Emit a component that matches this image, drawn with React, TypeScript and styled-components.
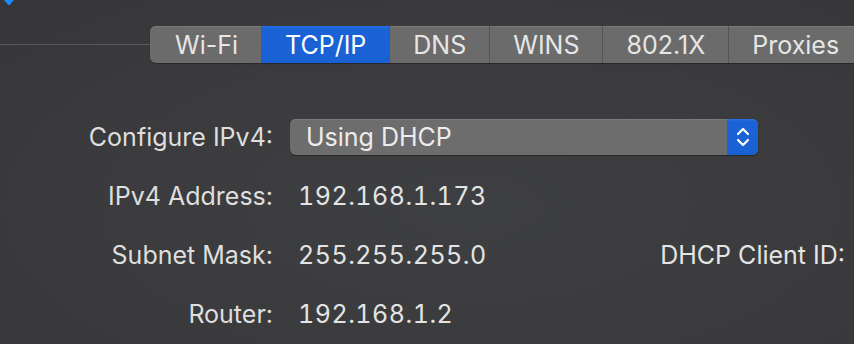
import React from 'react';
import styled, { createGlobalStyle } from 'styled-components';

const GlobalStyle = createGlobalStyle`
    html, body {
        margin: 0;
        padding: 0;
        background: #3b3b3d;
        overflow: hidden;
    }
    * {
        box-sizing: border-box;
    }
`;

const Window = styled.div`
    width: 854px;
    height: 344px;
    overflow: hidden;
    display: flex;
    flex-direction: column;
    font-family: "Inter", "Noto Sans", sans-serif;
    color: #e2e2e2;
    background: radial-gradient(ellipse at 55% 60%, #3e3f42 0%, #3b3b3d 55%, #363638 100%);
    & > * {
        flex-shrink: 0;
    }
`;

const TopStrip = styled.div`
    height: 26px;
    display: flex;
    align-items: flex-start;
    padding-left: 4px;
`;

const TabRow = styled.div`
    display: flex;
    align-items: center;
    height: 37px;
`;

const GroupLine = styled.div`
    width: 150px;
    flex-shrink: 0;
    height: 1px;
    background: #5a5a5c;
    margin-top: -1px;
`;

const TabGroup = styled.div`
    display: flex;
    flex-shrink: 0;
    height: 37px;
    border-radius: 6px 0 0 6px;
    overflow: hidden;
    background: #6b6b6b;
    box-shadow: inset 0 1px 0 #7a7a7a, 0 1px 1px rgba(0, 0, 0, 0.35);
`;

const Tab = styled.div<{ active?: boolean }>`
    display: flex;
    align-items: center;
    justify-content: center;
    flex-shrink: 0;
    padding: 0 23px;
    font-size: 25px;
    color: ${({ active }) => (active ? '#ffffff' : '#e6e6e6')};
    background: ${({ active }) => (active ? 'linear-gradient(#2470e6, #1a62d6 8%, #1a61d4)' : 'transparent')};
    border-left: 1px solid ${({ active }) => (active ? '#1a62d6' : '#555556')};
    &:first-child {
        border-left: none;
        padding-left: 25px;
    }
`;

const Form = styled.div`
    display: grid;
    grid-template-columns: 273px 1fr;
    column-gap: 17px;
    grid-auto-rows: 59px;
    align-items: center;
    margin-top: 44px;
`;

const Label = styled.div`
    text-align: right;
    font-size: 25px;
    color: #dedede;
`;

const Value = styled.div<{ split?: boolean }>`
    display: flex;
    align-items: center;
    justify-content: ${({ split }) => (split ? 'space-between' : 'flex-start')};
    padding-left: 8px;
    padding-right: 9px;
    font-size: 25px;
    color: #e4e4e4;
`;

const Number = styled.span`
    font-variant-numeric: tabular-nums;
    letter-spacing: 0.5px;
`;

const PopUp = styled.div`
    display: flex;
    align-items: stretch;
    width: 468px;
    height: 36px;
    border-radius: 6px;
    overflow: hidden;
    background: #6d6d6d;
    box-shadow: inset 0 1px 0 #7b7b7b, 0 1px 1px rgba(0, 0, 0, 0.35);
`;

const PopUpText = styled.div`
    flex: 1;
    display: flex;
    align-items: center;
    padding-left: 16px;
    font-size: 25px;
    color: #ececec;
`;

const Stepper = styled.div`
    width: 31px;
    display: flex;
    align-items: center;
    justify-content: center;
    background: linear-gradient(#2470e6, #1a62d6 8%, #1a61d4);
`;

const Marker = () => (
    <svg width="10" height="6" viewBox="0 0 10 6">
        <path d="M0 0 L10 0 L6 4.6 Q5 5.8 4 4.6 Z" fill="#1a8cff" />
    </svg>
);

const Chevrons = () => (
    <svg width="16" height="22" viewBox="0 0 16 22" fill="none" stroke="#ffffff"
        strokeWidth="2.2" strokeLinecap="round" strokeLinejoin="round">
        <polyline points="3 8 8 3 13 8" />
        <polyline points="3 14 8 19 13 14" />
    </svg>
);

const tabs = ['Wi-Fi', 'TCP/IP', 'DNS', 'WINS', '802.1X', 'Proxies'];

const App = (): JSX.Element => {
    return (
        <Window>
            <GlobalStyle />
            <TopStrip>
                <Marker />
            </TopStrip>
            <TabRow>
                <GroupLine />
                <TabGroup>
                    {tabs.map((tab) => (
                        <Tab key={tab} active={tab === 'TCP/IP'}>{tab}</Tab>
                    ))}
                </TabGroup>
            </TabRow>
            <Form>
                <Label>Configure IPv4:</Label>
                <div>
                    <PopUp>
                        <PopUpText>Using DHCP</PopUpText>
                        <Stepper>
                            <Chevrons />
                        </Stepper>
                    </PopUp>
                </div>
                <Label>IPv4 Address:</Label>
                <Value><Number>192.168.1.173</Number></Value>
                <Label>Subnet Mask:</Label>
                <Value split>
                    <Number>255.255.255.0</Number>
                    <span>DHCP Client ID:</span>
                </Value>
                <Label>Router:</Label>
                <Value><Number>192.168.1.2</Number></Value>
            </Form>
        </Window>
    );
};

export default App;
